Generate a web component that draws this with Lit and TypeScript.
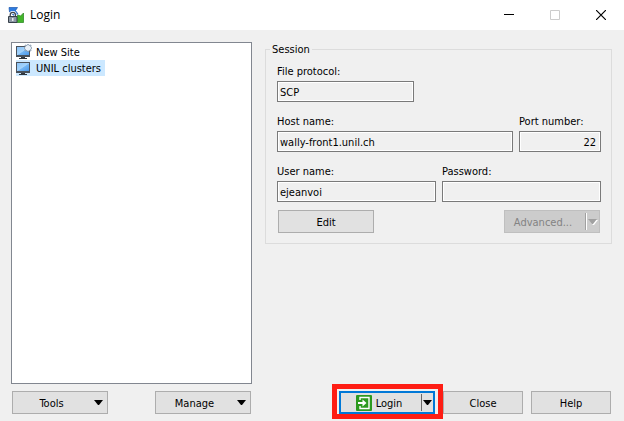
import { LitElement, html, css, svg } from "lit";
import { customElement } from "lit/decorators.js";

const caret = html`<svg class="caret" width="9" height="5" viewBox="0 0 9 5" aria-hidden="true"><path d="M0 0h9L5 5H4z" fill="currentColor"/></svg>`;

const screen = svg`
  <defs><linearGradient id="scr" x1="0" y1="0" x2="1" y2="1">
    <stop offset="0" stop-color="#8cc4f8"/><stop offset=".5" stop-color="#a4d3fb"/><stop offset=".55" stop-color="#74b6f4"/><stop offset="1" stop-color="#4a98ea"/>
  </linearGradient></defs>
  <path d="M0 2h14v11H0z" fill="#4a525c"/>
  <path d="M1 3h12v8H1z" fill="url(#scr)"/>
  <path d="M5 13h4v1h2v1H3v-1h2z" fill="#30363d"/>`;

@customElement("app-root")
export class AppRoot extends LitElement {
  static styles = css`
    :host { display: flex; flex-direction: column; min-height: 100vh; background: #f0f0f0; color: #000; font: 11px/14px "DejaVu Sans Condensed", Tahoma, "Liberation Sans", sans-serif; }
    * { box-sizing: border-box; }
    header { display: flex; align-items: center; height: 30px; background: #fff; padding-left: 8px; }
    h1 { flex: 1; margin: 0 0 0 6px; font: 12px/16px "Open Sans", "Segoe UI", sans-serif; }
    button { font: inherit; color: inherit; padding: 0; border: 0; background: none; }
    .win { width: 46px; height: 30px; display: grid; place-items: center; }
    .win:disabled { color: #ccc; }
    main { flex: 1; display: grid; grid-template-columns: 241px 1fr; gap: 13px; padding: 12px 12px 0 11px; }
    .sites { list-style: none; margin: 0; padding: 1px 4px; background: #fff; border: 1px solid #828790; }
    .sites li { display: flex; width: max-content; height: 16px; line-height: 18px; }
    .sites span { padding: 0 4px; }
    .sites .on { background: #cce8ff; }
    fieldset { min-width: 0; align-self: start; margin: 0; padding: 7px 10px 10px 11px; border: 1px solid #dcdcdc; }
    legend { margin-left: -7px; padding: 0 2px; height: 14px; line-height: 16px; }
    .fields { display: flex; flex-direction: column; gap: 11px; margin-bottom: 8px; }
    .row { display: flex; gap: 6px; }
    label { display: flex; flex-direction: column; gap: 1px; line-height: 17px; }
    .grow { flex: 1; min-width: 0; }
    .protocol { width: 137px; }
    .port { width: 82px; }
    input { width: 100%; height: 21px; margin: 0; padding: 1px 2px 0; border: 1px solid #7a7a7a; box-shadow: inset 0 0 0 1px #fff; background: #f0f0f0; font: inherit; color: inherit; border-radius: 0; outline: 0; }
    .port input { text-align: right; padding-right: 4px; }
    .actions { display: flex; justify-content: space-between; padding: 0 1px; }
    .btn { width: 96px; height: 23px; background: #e1e1e1; border: 1px solid #adadad; display: flex; align-items: center; justify-content: center; }
    .btn span { padding-top: 2px; }
    .menu { padding: 0 4px 0 0; gap: 4px; }
    .menu span { flex: 1; text-align: center; }
    .short { width: 80px; }
    .split { position: relative; }
    .split .main { flex: 1; height: 100%; display: flex; align-items: center; justify-content: center; gap: 4px; padding-right: 4px; }
    .split .drop { width: 14px; height: 17px; border-left: 1px solid #696969; display: grid; place-items: center; }
    .off { background: #ccc; border-color: #bfbfbf; color: #838383; }
    .off .drop { border-color: #a0a0a0; box-shadow: inset 1px 0 #fff; }
    .off .caret { color: #a0a0a0; filter: drop-shadow(1px 1px 0 #fff); }
    .default { border: 2px solid #0078d7; }
    .default .drop { width: 12px; }
    .mark { position: absolute; inset: -9px -10px -7px -9px; border: 5px solid #fe1d14; pointer-events: none; }
    footer { display: flex; padding: 7px 13px 7px 12px; }
    .left { display: flex; justify-content: space-between; width: 239px; }
    .right { flex: 1; display: flex; justify-content: flex-end; gap: 8px; }
  `;

  render() {
    return html`
      <header>
        <svg width="16" height="16" viewBox="0 0 16 16" aria-hidden="true">
          <path d="M1 .5h8.500L7.500 3.500 10 7 6 8.500 1.500 5z" fill="#2d7be0" stroke="#1c57ad" stroke-width=".7"/>
          <path d="M15.500 6v9.500H8l-1-4 3-3.500 2.500 1z" fill="#42b52a" stroke="#23821a" stroke-width=".7"/>
          <path d="M2.200 10V8a2.600 2.600 0 0 1 5.200 0v2" fill="none" stroke="#fff" stroke-width="2.600"/>
          <path d="M2.200 10V8a2.600 2.600 0 0 1 5.200 0v2" fill="none" stroke="#3d4650" stroke-width="1.300"/>
          <path d="M.5 9.500h8.500v6H.5z" fill="#8d98a5" stroke="#37404a"/>
          <path d="M4.200 11h1.200v3H4.200z" fill="#fff"/>
        </svg>
        <h1>Login</h1>
        <button class="win" aria-label="Minimize"><svg width="10" height="10"><path d="M0 4h10v1H0z" fill="currentColor"/></svg></button>
        <button class="win" aria-label="Maximize" disabled><svg width="10" height="10"><path d="M.5.5h9v9h-9z" fill="none" stroke="currentColor"/></svg></button>
        <button class="win" aria-label="Close window"><svg width="10" height="10"><path d="M0 0l10 10M10 0L0 10" stroke="currentColor" stroke-width="1.200"/></svg></button>
      </header>
      <main>
        <ul class="sites" role="listbox" aria-label="Sites">
          <li role="option" aria-selected="false">
            <svg width="16" height="16" viewBox="0 0 16 16" aria-hidden="true">${screen}
              <path d="M12 0l1 1.500 2-.5-.3 2L16 4l-1.300 1 .3 2-2-.5L12 8l-1-1.500L9 7l.3-2L8 4l1.300-1L9 1l2 .5z" fill="#e9f0f7" stroke="#7f93a8" stroke-width=".8"/>
            </svg><span>New Site</span>
          </li>
          <li class="on" role="option" aria-selected="true">
            <svg width="16" height="16" viewBox="0 0 16 16" aria-hidden="true">${screen}</svg><span>UNIL clusters</span>
          </li>
        </ul>
        <fieldset>
          <legend>Session</legend>
          <div class="fields">
            <div class="row"><label class="protocol">File protocol:<input readonly value="SCP"></label></div>
            <div class="row">
              <label class="grow">Host name:<input readonly value="wally-front1.unil.ch"></label>
              <label class="port">Port number:<input readonly value="22"></label>
            </div>
            <div class="row">
              <label class="grow">User name:<input readonly value="ejeanvoi"></label>
              <label class="grow">Password:<input type="password" readonly></label>
            </div>
          </div>
          <div class="actions">
            <button class="btn"><span>Edit</span></button>
            <div class="btn split off">
              <button class="main" disabled><span>Advanced...</span></button>
              <button class="drop" disabled aria-label="Advanced options">${caret}</button>
            </div>
          </div>
        </fieldset>
      </main>
      <footer>
        <div class="left">
          <button class="btn menu"><span>Tools</span>${caret}</button>
          <button class="btn menu"><span>Manage</span>${caret}</button>
        </div>
        <div class="right">
          <div class="btn split default">
            <button class="main">
              <svg width="16" height="16" viewBox="0 0 16 16" aria-hidden="true">
                <rect width="16" height="16" rx="1" fill="#2c9a1f"/>
                <path d="M4 5V2.500h9v11H4V11" fill="none" stroke="#fff" stroke-width="1.400"/>
                <path d="M2 7h4.500V4.500L10.500 8l-4 3.500V9H2z" fill="#fff"/>
              </svg><span>Login</span>
            </button>
            <button class="drop" aria-label="Login options">${caret}</button>
            <div class="mark"></div>
          </div>
          <button class="btn short"><span>Close</span></button>
          <button class="btn short"><span>Help</span></button>
        </div>
      </footer>`;
  }
}
